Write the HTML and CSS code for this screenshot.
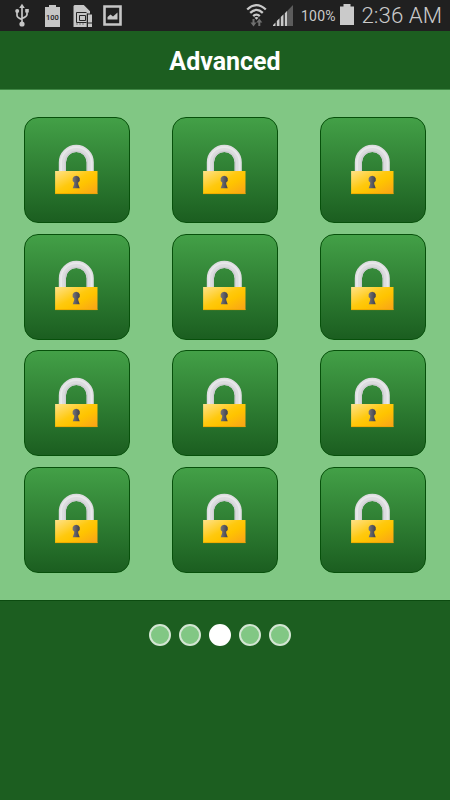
FILE: index.html
```
<!DOCTYPE html>
<html lang="en">
<head>
<meta charset="utf-8">
<title>Advanced</title>
<link rel="stylesheet" href="styles.css">
</head>
<body>
<svg class="defs" width="0" height="0" aria-hidden="true">
  <defs>
    <linearGradient id="gold" x1="0" y1="0" x2="1" y2="1">
      <stop offset="0" stop-color="#ffe28a"/><stop offset=".45" stop-color="#ffc90e"/><stop offset=".6" stop-color="#ffc400"/><stop offset="1" stop-color="#f9a11b"/>
    </linearGradient>
    <linearGradient id="hole" x1="0" y1="0" x2="1" y2="0">
      <stop offset="0" stop-color="#77757a"/><stop offset="1" stop-color="#3f3f49"/>
    </linearGradient>
    <symbol id="lock" viewBox="0 0 44 51">
      <path d="M8.400 28V18.300a13.900 13.900 0 0 1 27.800 0V28" fill="none" stroke="#dcdcdf" stroke-width="7.200"/>
      <path d="M11.300 28V18.300a11 11 0 0 1 22 0V28" fill="none" stroke="#cdcdd1" stroke-width="1.200"/>
      <path d="M7.100 28V18.300a15.200 15.200 0 0 1 30.400 0V28" fill="none" stroke="#e8e8ea" stroke-width="1.800"/>
      <rect x="1.100" y="27" width="42.400" height="23" fill="url(#gold)"/>
      <path d="M1.100 49.600h42.400" stroke="#e9a500" stroke-width=".8"/>
      <path d="M22.200 31.700a3.700 3.700 0 0 0-2 6.800v1.500L18.700 44.200h7L24.200 40v-1.500A3.700 3.700 0 0 0 22.200 31.700z" fill="url(#hole)"/>
    </symbol>
  </defs>
</svg>
<header class="status">
  <svg class="usb" width="14" height="24" viewBox="0 0 14 24" fill="none" stroke="#c6c6c6" stroke-width="1.700">
    <path d="M7 4v16M2 9v3.500q0 2 5 4M12 8v3.500q0 2-5 4"/>
    <path d="M7 .8 9.800 5H4.200z" fill="#c6c6c6" stroke="none"/>
    <circle cx="2.200" cy="8" r="2" fill="#c6c6c6" stroke="none"/>
    <path d="M10.200 6h3.600v3.600h-3.600z" fill="#c6c6c6" stroke="none"/>
    <circle cx="7" cy="21" r="2.600" fill="#c6c6c6" stroke="none"/>
  </svg>
  <svg class="full" width="15" height="22" viewBox="0 0 15 22">
    <path d="M4 0h7v2H15v20H0V2h4z" fill="#c6c6c6"/>
    <text x="7.500" y="14.800" text-anchor="middle">100</text>
  </svg>
  <svg class="sd" width="20" height="22" viewBox="0 0 20 22">
    <path d="M1.500 0h9.300L17 6.200V8.500h-3V22H.5V1z" fill="#c6c6c6"/>
    <path d="M3.500 7.500h10M3.500 7.500v10h10M6.500 10.500h6v5h-6z" fill="none" stroke="#252525" stroke-width="1"/>
    <path d="M4 18v2M7 18v2M10 18v2" stroke="#666" stroke-width=".8"/>
    <path d="M14.200 8.500v13.500" stroke="#252525"/>
    <path d="M15 9.500H19v8h-4zM15 18.500H19V22h-4z" fill="#c6c6c6"/>
  </svg>
  <svg class="pic" width="19" height="21" viewBox="0 0 19 21">
    <path d="M1.500 1.500h16v18h-16z" fill="none" stroke="#c6c6c6" stroke-width="2.600"/>
    <path d="M4.500 14.500v-2.500l3-2.500 2.500 2 4.500-4v7z" fill="#c6c6c6"/>
  </svg>
  <svg class="wifi" width="22" height="24" viewBox="0 0 22 24" fill="none" stroke="#cacaca" stroke-width="2.300">
    <path d="M1.200 5.500q9.300-8.800 18.600 0M4.200 8.900q6.300-6 12.600 0M7.200 12.200q3.300-3.200 6.600 0"/>
    <path d="M8.500 13.700q2-1.600 4 0l-2 2z" fill="#cacaca" stroke="none"/>
    <path d="M7.500 15v5M13.300 22v-5" stroke="#707070" stroke-width="2"/>
    <path d="M4.500 18.500h6l-3 4zM10.300 18.500h6l-3-4z" fill="#707070" stroke="none"/>
  </svg>
  <svg class="signal" width="20" height="21" viewBox="0 0 20 21">
    <path d="M13.500 6.800 20 0v21h-6.500z" fill="#5c5c5c"/>
    <path d="M0 21v-1l2.500-2.500V21zM3.800 21v-5l2.700-2.700V21zM7.800 21v-9l2.700-2.700V21zM11.800 21V8.300l2.200-2.200V21z" fill="#cacaca"/>
  </svg>
  <span class="percent">100%</span>
  <svg class="battery" width="14" height="22" viewBox="0 0 14 22"><path d="M3.500 0h7v2.500H14V21H0V2.500h3.500z" fill="#cacaca"/></svg>
  <span class="time">2:36 AM</span>
</header>
<h1 class="title">Advanced</h1>
<main class="levels">
  <div class="tile"><svg class="lock"><use href="#lock"/></svg></div>
  <div class="tile"><svg class="lock"><use href="#lock"/></svg></div>
  <div class="tile"><svg class="lock"><use href="#lock"/></svg></div>
  <div class="tile"><svg class="lock"><use href="#lock"/></svg></div>
  <div class="tile"><svg class="lock"><use href="#lock"/></svg></div>
  <div class="tile"><svg class="lock"><use href="#lock"/></svg></div>
  <div class="tile"><svg class="lock"><use href="#lock"/></svg></div>
  <div class="tile"><svg class="lock"><use href="#lock"/></svg></div>
  <div class="tile"><svg class="lock"><use href="#lock"/></svg></div>
  <div class="tile"><svg class="lock"><use href="#lock"/></svg></div>
  <div class="tile"><svg class="lock"><use href="#lock"/></svg></div>
  <div class="tile"><svg class="lock"><use href="#lock"/></svg></div>
</main>
<nav class="dots">
  <i class="dot"></i><i class="dot"></i><i class="dot active"></i><i class="dot"></i><i class="dot"></i>
</nav>
</body>
</html>
```
FILE: styles.css
```
* { box-sizing: border-box; }
body {
  margin: 0;
  height: 800px;
  overflow: hidden;
  background: #1c5e20;
  font-family: Roboto, "Liberation Sans", sans-serif;
}
.defs { display: block; }
.status {
  display: flex;
  align-items: flex-start;
  height: 31px;
  padding: 3px 0 0 15px;
  background: #202020;
  color: #cacaca;
  white-space: nowrap;
}
.status svg { flex: none; display: block; overflow: visible; }
.full { margin: 2px 0 0 16px; }
.full text { font-size: 7.5px; font-weight: 500; fill: #202020; }
.sd { margin: 2px 0 0 13px; }
.pic { margin: 2px 0 0 10px; }
.wifi { margin: 1px 0 0 124px; }
.signal { margin: 2px 0 0 5px; }
.percent {
  width: 39px;
  margin: 3px 0 0 8px;
  font-size: 14px;
  letter-spacing: 0.25px;
  line-height: 20px;
}
.battery { margin-top: 1px; }
.time {
  margin: 0 0 0 7.5px;
  font-size: 22.3px;
  font-weight: 300;
  line-height: 25px;
}
.title {
  margin: 0;
  height: 59px;
  border-bottom: 1px solid #3f8644;
  color: #fff;
  font-size: 25px;
  font-weight: 700;
  line-height: 61px;
  text-align: center;
}
.levels {
  display: grid;
  grid-template-columns: repeat(3, 106px);
  grid-template-rows: repeat(4, 106px);
  justify-content: space-between;
  row-gap: 10.67px;
  height: 510px;
  padding: 27px 24px 0;
  background: #81c784;
}
.tile {
  display: flex;
  justify-content: center;
  align-items: center;
  border: 1.5px solid #07500b;
  border-radius: 14px;
  background: linear-gradient(#43a047, #1b5e20);
}
.lock { display: block; width: 44px; height: 51px; margin: -2px 2px 0 0; }
.dots {
  display: flex;
  justify-content: center;
  gap: 8px;
  padding: 23px 10px 0 0;
  border-top: 1px solid #0c4b10;
}
.dot {
  width: 22px;
  height: 22px;
  border: 2px solid #d3e6d3;
  border-radius: 50%;
  background: #81c784;
}
.dot.active { border-color: #fff; background: #fff; }
```
